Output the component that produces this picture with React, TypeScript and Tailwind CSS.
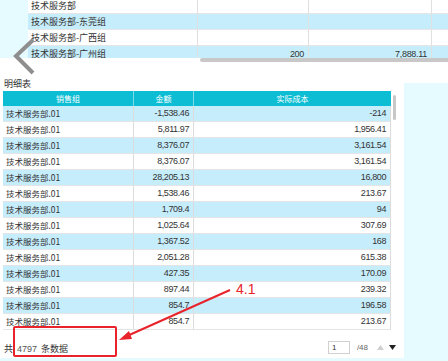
import React from "react";

const rows: [string, string][] = [
  ["-1,538.46", "-214"],
  ["5,811.97", "1,956.41"],
  ["8,376.07", "3,161.54"],
  ["8,376.07", "3,161.54"],
  ["28,205.13", "16,800"],
  ["1,538.46", "213.67"],
  ["1,709.4", "94"],
  ["1,025.64", "307.69"],
  ["1,367.52", "168"],
  ["2,051.28", "615.38"],
  ["427.35", "170.09"],
  ["897.44", "239.32"],
  ["854.7", "196.58"],
  ["854.7", "213.67"],
];

const topRows = ["技术服务部", "技术服务部-东莞组", "技术服务部-广西组", "技术服务部-广州组"];

export default function App() {
  return (
    <div className="relative w-[448px] h-[361px] overflow-hidden bg-white text-[#333] font-['Noto_Sans_CJK_SC',sans-serif]">
      {/* top section */}
      <div className="flex h-[58px]">
        <div className="w-[28px] bg-[#e6fbff]" />
        <div className="flex-1 overflow-hidden">
          <div className="-mt-[2px]">
            {topRows.map((t, i) => (
              <div
                key={t}
                className={`flex h-[16px] border-b border-[#e6e6e6] ${i % 2 === 1 ? "bg-[#c6edfc]" : "bg-white"}`}
              >
                <div className="w-[170px] border-r border-[#e0e0e0] pl-[3px] text-[9px] leading-[16px] whitespace-nowrap">
                  {t}
                </div>
                <div className="w-[111px] border-r border-[#e0e0e0] pr-[4px] text-right text-[9px] leading-[16px] font-['Liberation_Sans',sans-serif] tracking-[-0.3px]">
                  {i === 3 ? "200" : ""}
                </div>
                <div className="w-[123px] border-r border-[#e0e0e0] pr-[4px] text-right text-[9px] leading-[16px] font-['Liberation_Sans',sans-serif] tracking-[-0.3px]">
                  {i === 3 ? "7,888.11" : ""}
                </div>
                <div className="flex-1" />
              </div>
            ))}
          </div>
        </div>
      </div>
      <div className="flex h-[4px]">
        <div className="ml-[200px] flex-1 rounded-l-[2px] bg-[#c8c8c8]" />
      </div>

      {/* main section */}
      <div className="flex h-[299px]">
        <div className="w-[404px] flex flex-col">
          <div className="h-[29px] flex items-center pl-[4px] pt-[14px] text-[9px]">明细表</div>
          <div className="flex">
            <div className="ml-[3px] w-[388px]">
              <div className="flex h-[15px] bg-[#0cbdd4] text-white text-[8px] leading-[15px]">
                <div className="w-[131px] text-center border-r border-[#7fd9e6]">销售组</div>
                <div className="w-[60px] text-center border-r border-[#7fd9e6]">金额</div>
                <div className="flex-1 text-center">实际成本</div>
              </div>
              {rows.map((r, i) => (
                <div
                  key={i}
                  className={`flex h-[16px] border-b border-[#e4e4e4] ${i % 2 === 0 ? "bg-[#c6edfc]" : "bg-white"}`}
                >
                  <div className="w-[131px] border-r border-[#dcdcdc] pl-[3px] text-[8.5px] leading-[15px] whitespace-nowrap">
                    技术服务部.01
                  </div>
                  <div className="w-[60px] border-r border-[#dcdcdc] pr-[4px] text-right text-[9px] leading-[15px] font-['Liberation_Sans',sans-serif] tracking-[-0.4px]">
                    {r[0]}
                  </div>
                  <div className="flex-1 border-r border-[#dcdcdc] pr-[4px] text-right text-[9px] leading-[15px] font-['Liberation_Sans',sans-serif] tracking-[-0.4px]">
                    {r[1]}
                  </div>
                </div>
              ))}
            </div>
            <div className="w-[13px] pl-[2px] pt-[4px]">
              <div className="w-[3px] h-[25px] rounded-[2px] bg-[#c8c8c8]" />
            </div>
          </div>
          <div className="flex-1 flex items-end pb-[2px] pl-[4px] pr-[8px]">
            <div className="flex gap-[4px] text-[9px] leading-[12px] whitespace-nowrap mb-[1px]">
              <span>共</span>
              <span className="font-['Liberation_Sans',sans-serif] text-[#555]">4797</span>
              <span>条数据</span>
            </div>
            <div className="ml-auto flex items-center mb-[2px]">
              <div className="w-[22px] h-[13px] border border-[#d0d0d0] bg-white text-[8px] leading-[11px] pl-[3px] font-['Liberation_Sans',sans-serif]">
                1
              </div>
              <div className="ml-[7px] text-[8px] text-[#666] font-['Liberation_Sans',sans-serif]">/48</div>
              <svg className="ml-[9px]" width="7" height="5" viewBox="0 0 7 5">
                <polygon points="0,5 7,5 3.5,0" fill="#cfcfcf" />
              </svg>
              <svg className="ml-[5px]" width="7" height="5" viewBox="0 0 7 5">
                <polygon points="0,0 7,0 3.5,5" fill="#222" />
              </svg>
            </div>
          </div>
          <div className="h-[3px] bg-[#e6fbff]" />
        </div>
        <div className="flex-1 flex flex-col">
          <div className="h-[21px]" />
          <div className="flex-1 bg-[#e6fbff]" />
        </div>
      </div>

      {/* chevron overlay */}
      <svg className="absolute left-[12px] top-[38px]" width="26" height="38" viewBox="0 0 26 38">
        <polyline points="21,2 4,18 21,35" fill="none" stroke="#8e8e8e" strokeWidth="4" />
      </svg>

      {/* annotation */}
      <div className="absolute left-[13px] top-[326px] w-[104px] h-[31px] border-2 border-[#e8232b] rounded-[2px]" />
      <svg className="absolute left-0 top-0" width="448" height="361" viewBox="0 0 448 361">
        <line x1="230" y1="290" x2="127" y2="336" stroke="#e8232b" strokeWidth="2" />
        <polygon points="119,340 129,331 132,339" fill="#e8232b" />
      </svg>
      <div className="absolute left-[236px] top-[281px] text-[14px] leading-[16px] text-[#e8232b] font-['Liberation_Sans',sans-serif]">
        4.1
      </div>
    </div>
  );
}
